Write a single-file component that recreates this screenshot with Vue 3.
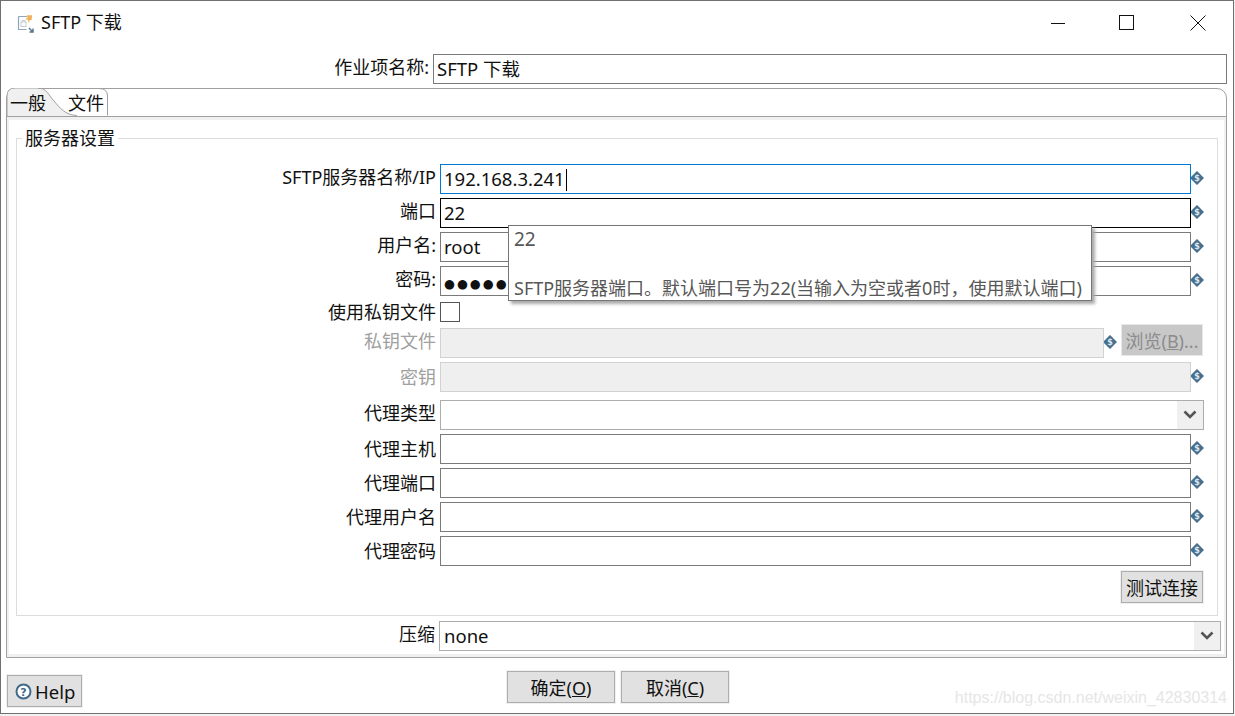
<template>
  <div class="window">
    <div class="titlebar">
      <div class="title">
        <svg class="doc-icon" width="18" height="20" viewBox="0 0 18 20">
          <path d="M1.5 2.5h9M1.5 2.5v13h8" fill="none" stroke="#8fa6ba" stroke-width="1.2" />
          <rect x="4" y="8" width="5" height="4.5" fill="none" stroke="#c4ccd2" />
          <path d="M5 8V6.5h3V8" fill="none" stroke="#c4ccd2" />
          <path d="M10 1h5v2l-1 1h1v2h-2l-1 3-1-1V6H9V4h1z" fill="#f5c77e" />
          <path d="M11 3h4M11 5h3" stroke="#e8973a" stroke-width="1" />
          <path d="M12 14l4 4M16 14.5V18h-3.5" fill="none" stroke="#54738c" stroke-width="1.4" />
        </svg>
        <span>SFTP 下载</span>
      </div>
      <div class="win-controls">
        <svg width="16" height="16" viewBox="0 0 16 16"><path d="M1 8.5h14" stroke="#111" /></svg>
        <svg class="max" width="16" height="16" viewBox="0 0 16 16"><rect x="0.5" y="0.5" width="14" height="14" fill="none" stroke="#111" /></svg>
        <svg width="16" height="16" viewBox="0 0 16 16"><path d="M0.5 0.5l15 15M15.5 0.5l-15 15" stroke="#111" /></svg>
      </div>
    </div>

    <div class="name-row">
      <label>作业项名称:</label>
      <div class="field grow">SFTP 下载</div>
    </div>

    <div class="folder">
      <div class="tabs">
        <svg class="tab-shape" width="102" height="28" viewBox="0 0 102 28">
          <path d="M0 28V8Q0 0 8 0H31C40 0 42 8 47 13C53 20 58 27 70 27.5V28Z" fill="#f0f0f0" />
          <path d="M0 28V8Q0 0 8 0H31C40 0 42 8 47 13C53 20 58 27 70 27.5" fill="none" stroke="#a0a0a0" />
          <path d="M31 0.5H92Q100.5 0.5 100.5 8V27.5" fill="none" stroke="#a0a0a0" />
        </svg>
        <span class="tab first">一般</span>
        <span class="tab">文件</span>
      </div>
      <div class="pane">
        <div class="group">
          <span class="legend">服务器设置</span>

          <div v-for="r in mainRows" :key="r.label" class="row">
            <label>{{ r.label }}</label>
            <div class="field wide" :class="r.state">
              <span v-if="r.dots" class="dots">●●●●●●</span>
              <template v-else>{{ r.value }}</template>
              <i v-if="r.state === 'focus'" class="caret"></i>
            </div>
            <svg class="var-icon" width="14" height="14" viewBox="0 0 14 14">
              <rect x="2" y="2" width="10" height="10" transform="rotate(45 7 7)" fill="#47708f" />
              <text x="7" y="10" text-anchor="middle" class="dollar">$</text>
            </svg>
          </div>

          <div class="row check-row">
            <label>使用私钥文件</label>
            <span class="checkbox"></span>
          </div>

          <div class="row key-row">
            <label class="off">私钥文件</label>
            <div class="field key disabled"></div>
            <svg class="var-icon" width="14" height="14" viewBox="0 0 14 14">
              <rect x="2" y="2" width="10" height="10" transform="rotate(45 7 7)" fill="#47708f" />
              <text x="7" y="10" text-anchor="middle" class="dollar">$</text>
            </svg>
            <button class="btn browse">浏览(<u>B</u>)...</button>
          </div>

          <div class="row secret-row">
            <label class="off middle">密钥</label>
            <div class="field wide disabled"></div>
            <svg class="var-icon" width="14" height="14" viewBox="0 0 14 14">
              <rect x="2" y="2" width="10" height="10" transform="rotate(45 7 7)" fill="#47708f" />
              <text x="7" y="10" text-anchor="middle" class="dollar">$</text>
            </svg>
          </div>

          <div class="row">
            <label>代理类型</label>
            <div class="field combo-wide soft">
              <span class="arrow">
                <svg width="14" height="10" viewBox="0 0 14 10"><path d="M1.5 1.5L7 7l5.5-5.5" fill="none" stroke="#555" stroke-width="2.6" /></svg>
              </span>
            </div>
          </div>

          <div v-for="p in proxyRows" :key="p" class="row">
            <label class="middle">{{ p }}</label>
            <div class="field wide"></div>
            <svg class="var-icon" width="14" height="14" viewBox="0 0 14 14">
              <rect x="2" y="2" width="10" height="10" transform="rotate(45 7 7)" fill="#47708f" />
              <text x="7" y="10" text-anchor="middle" class="dollar">$</text>
            </svg>
          </div>

          <div class="test-row">
            <button class="btn test">测试连接</button>
          </div>

          <div class="tooltip">
            <div class="tip-value">22</div>
            <div class="tip-desc">SFTP服务器端口。默认端口号为22(当输入为空或者0时，使用默认端口)</div>
          </div>
        </div>

        <div class="row compress">
          <label>压缩</label>
          <div class="field combo-full soft">
            none
            <span class="arrow">
              <svg width="14" height="10" viewBox="0 0 14 10"><path d="M1.5 1.5L7 7l5.5-5.5" fill="none" stroke="#555" stroke-width="2.6" /></svg>
            </span>
          </div>
        </div>
      </div>
    </div>

    <div class="footer">
      <button class="btn help">
        <svg width="17" height="17" viewBox="0 0 17 17">
          <circle cx="8.5" cy="8.5" r="7" fill="#fff" stroke="#3f6a8c" stroke-width="2" />
          <text x="8.5" y="12.6" text-anchor="middle" class="q">?</text>
        </svg>
        Help
      </button>
      <div class="actions">
        <button class="btn action">确定(<u>O</u>)</button>
        <button class="btn action">取消(<u>C</u>)</button>
      </div>
      <span class="watermark">https://blog.csdn.net/weixin_42830314</span>
    </div>
  </div>
</template>

<script setup>
const mainRows = [
  { label: 'SFTP服务器名称/IP', value: '192.168.3.241', state: 'focus' },
  { label: '端口', value: '22', state: 'hover' },
  { label: '用户名:', value: 'root' },
  { label: '密码:', dots: true },
]
const proxyRows = ['代理主机', '代理端口', '代理用户名', '代理密码']
</script>

<style>
body {
  background: #f2f2f2;
}
</style>

<style scoped>
.window {
  width: 1234px;
  height: 714px;
  box-sizing: border-box;
  border: 1px solid #707070;
  background: #fff;
  font-family: "Noto Sans", "Noto Sans CJK SC", sans-serif;
  font-size: 18px;
  color: #111;
  overflow: hidden;
}

.titlebar {
  height: 53px;
  display: flex;
  justify-content: space-between;
}

.title {
  display: flex;
  align-items: flex-start;
  gap: 6px;
  padding: 9px 0 0 16px;
  line-height: 24px;
}

.doc-icon {
  margin-top: 4px;
}

.win-controls {
  display: flex;
  gap: 54px;
  padding: 14px 27px 0 0;
  height: 16px;
}

.max {
  margin: 0 1px 0 -1px;
}

.name-row {
  display: flex;
  margin-right: 6px;
}

.name-row label {
  width: 428px;
  margin-right: 4px;
  text-align: right;
}

label {
  flex: none;
  line-height: 26px;
  white-space: nowrap;
}

label.middle {
  line-height: 30px;
}

.field {
  position: relative;
  flex: none;
  box-sizing: border-box;
  height: 30px;
  line-height: 28px;
  padding-left: 3px;
  border: 1px solid #7a7a7a;
  background: #fff;
  font-size: 18.5px;
  white-space: nowrap;
}

.grow {
  flex: 1;
}

.wide {
  width: 751px;
}

.key {
  width: 664px;
}

.combo-wide {
  width: 764px;
}

.combo-full {
  width: 782px;
  padding-left: 4px;
}

.focus {
  border-color: #0078d7;
}

.hover {
  border-color: #000;
}

.soft {
  border-color: #adadad;
}

.disabled {
  background: #efefef;
  border-color: #d2d2d2;
}

.caret {
  display: inline-block;
  width: 1px;
  height: 22px;
  margin-left: 1px;
  vertical-align: -5px;
  background: #000;
}

.dots {
  font-family: "DejaVu Sans", sans-serif;
  font-size: 12.5px;
  letter-spacing: 2px;
}

.arrow {
  position: absolute;
  top: 0;
  right: 0;
  width: 26px;
  height: 28px;
  display: flex;
  align-items: center;
  justify-content: center;
  background: #f0f0f0;
}

.folder {
  box-sizing: border-box;
  height: 570px;
  margin: 4px 6px 0 5px;
  border: 1px solid #a0a0a0;
  border-radius: 10px 10px 0 0;
}

.tabs {
  position: relative;
  height: 27px;
  display: flex;
  border-bottom: 1px solid #a0a0a0;
}

.tab-shape {
  position: absolute;
  left: 0;
  top: -1px;
}

.tab {
  position: relative;
  line-height: 28px;
  padding-left: 22px;
}

.tab.first {
  padding-left: 3px;
}

.pane {
  box-sizing: border-box;
  height: 540px;
  border: solid #f0f0f0;
  border-width: 3px 2px;
  padding: 18px 6px 0 7px;
}

.group {
  position: relative;
  box-sizing: border-box;
  height: 478px;
  padding-top: 25px;
  border: 1px solid #dcdcdc;
}

.legend {
  position: absolute;
  left: 5px;
  top: -13px;
  padding: 0 3px;
  line-height: 24px;
  background: #fff;
}

.row {
  display: flex;
  margin-bottom: 4px;
}

.row label {
  width: 419px;
  margin-right: 4px;
  text-align: right;
}

.row label.off {
  color: #a0a0a0;
}

.var-icon {
  flex: none;
  margin: 7px 0 0 -1px;
}

.check-row {
  height: 20px;
  margin: 6px 0;
}

.check-row label {
  line-height: 20px;
}

.checkbox {
  box-sizing: border-box;
  width: 20px;
  height: 20px;
  border: 1px solid #555;
  background: #fff;
}

.key-row {
  position: relative;
}

.secret-row {
  margin-bottom: 8px;
}

.test-row {
  display: flex;
  justify-content: flex-end;
  padding: 1px 14px 0 0;
}

.btn {
  box-sizing: border-box;
  height: 32px;
  padding: 0;
  border: 1px solid #adadad;
  outline: 1px solid #f0f0f0;
  background: #e1e1e1;
  font-family: inherit;
  font-size: 18px;
  color: #111;
}

.browse,
.test {
  width: 82px;
}

.browse {
  position: absolute;
  left: 1104px;
  top: -4px;
  color: #8c8c8c;
  background: #c8c8c8;
  border-color: #e8e8e8;
  outline: none;
}

.tooltip {
  position: absolute;
  left: 491px;
  top: 86px;
  box-sizing: border-box;
  width: 584px;
  height: 76px;
  padding: 0 5px;
  border: 1px solid #767676;
  background: #fff;
  box-shadow: 3px 3px 3px #aaa;
  color: #575757;
  font-size: 18px;
  line-height: 26px;
}

.tip-value {
  font-size: 19px;
}

.tip-desc {
  margin-top: 23px;
  white-space: nowrap;
}

.compress {
  margin: 5px 0 0 0;
}

.footer {
  position: relative;
  height: 50px;
}

.actions {
  display: flex;
  justify-content: center;
  gap: 6px;
  padding: 13px 0 0 2px;
}

.action {
  width: 108px;
}

.help {
  position: absolute;
  left: 6px;
  top: 17px;
  width: 75px;
  display: flex;
  align-items: center;
  gap: 3px;
  padding-left: 7px;
  font-size: 18.5px;
}

.dollar {
  font-family: "DejaVu Sans", sans-serif;
  font-size: 8px;
  font-weight: bold;
  fill: #dfe8ef;
}

.q {
  font-family: "DejaVu Sans", sans-serif;
  font-size: 11px;
  font-weight: bold;
  fill: #3f6a8c;
}

.watermark {
  position: absolute;
  right: 6px;
  top: 31px;
  font-family: "Liberation Sans", sans-serif;
  font-size: 16px;
  color: #e6e6e6;
}
</style>
